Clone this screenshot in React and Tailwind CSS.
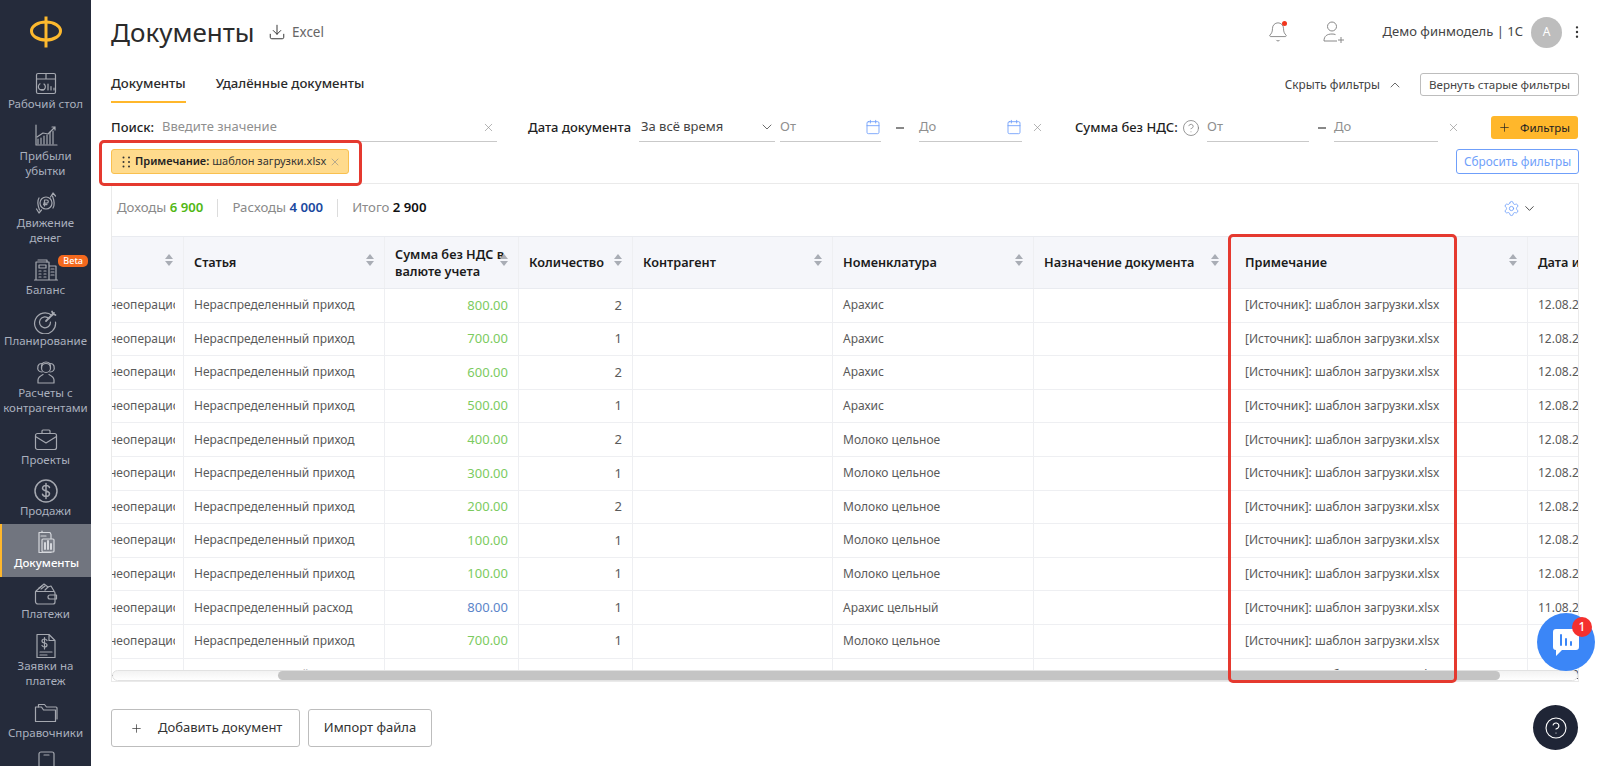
import React from "react";
import { Bell, Download, X, ChevronDown, ChevronUp, Calendar, CircleHelp, Plus, Settings, EllipsisVertical } from "lucide-react";

const S = (p) => <svg width="26" height="26" viewBox="0 0 26 26" fill="none" stroke="currentColor" strokeWidth="1.2" strokeLinecap="round" strokeLinejoin="round">{p.children}</svg>;

const icons = {
  desk: <S><rect x="3.5" y="2.5" width="19" height="20" rx="1.5" /><path d="M3.5 8h19M13 2.5V8" /><path d="M11 13a3.5 3.5 0 1 1-4-.2M7 18.5h4" /><path d="M15 13v6M18 15.5V19M21 17v2" /></S>,
  profit: <S><path d="M3 2v20h21" /><path d="M5 21v-5M8 21v-6M11 21v-8M14 21v-9M17 21V9M20 21V8" /><path d="M4 14l6-4 5 1 7-7M19 4h3v3" /></S>,
  money: <S><circle cx="13" cy="13" r="6" /><path d="M11.5 16v-6h2.2a1.6 1.6 0 0 1 0 3.2h-3M10.5 14.6h3.5" /><path d="M20 18c2-3 1-8-.5-12M17.5 7L20 3l2.5 3M6 8c-2 3-1 8 .5 12M3.5 19L6 23l2.5-3" /></S>,
  balance: <S><path d="M3 23V5h13v18M1.500 23h23M16 9h7v14" /><path d="M5 3h9v2M6 8h7v3H6zM6 14h2M11 14h2M6 17h2M11 17h2M6 20h2M11 20h2M18 12h3M18 15h3M18 18h3" /></S>,
  plan: <S><path d="M19 7.500A10.500 10.500 0 1 0 22.500 14" /><path d="M16 10.500A5.500 5.500 0 1 0 17.500 14" /><path d="M13 13l8-8M19 3.500l1 2.500 2.500 1" strokeWidth="1.800" /></S>,
  people: <S><circle cx="13" cy="8" r="4.500" /><path d="M8.500 8C8 4 10 2 13 2s5 2 4.500 6" /><path d="M5 23v-3c0-3 3-4.500 5-5.500M21 23v-3c0-3-3-4.500-5-5.500M5 23h16M9 12c-3 0-5-2-4-6 .5-1.500 2-2.500 3.500-2.500M17 12c3 0 5-2 4-6-.5-1.500-2-2.500-3.500-2.500" /></S>,
  case: <S><rect x="2.500" y="6.500" width="21" height="16" rx="2" /><path d="M9 6.500V4a1 1 0 0 1 1-1h6a1 1 0 0 1 1 1v2.500M2.500 9.500L13 16l10.500-6.500" /></S>,
  sale: <S><circle cx="13" cy="13" r="11" strokeWidth="1.500" /><path d="M16.500 9.500C16 8 14.500 7.500 13 7.500s-3.500 1-3.500 2.800S11 12.500 13 13s3.500 1 3.500 2.800-2 2.700-3.500 2.700-3-.7-3.500-2.200M13 5.500v15" strokeWidth="1.500" /></S>,
  docs: <S><path d="M5 2.500h11l1 2v18H5z" /><path d="M8 2.500V1M7 6h5" /><rect x="8" y="9" width="12" height="13" rx="1" fill="#7a7e88" /><path d="M11 19v-6M14 19v-8M17 19v-5" strokeWidth="2" /></S>,
  wallet: <S><path d="M3 10l8-7 4 3 3-1 3 5" /><path d="M6 7l3-2M8 8l4-3M12 9l3-3" /><path d="M2.500 10.500h18a1.500 1.500 0 0 1 1.500 1.500v9a2 2 0 0 1-2 2H5a2.500 2.500 0 0 1-2.500-2.500zM23.500 14H17a2 2 0 0 0 0 4h6.500z" /></S>,
  bill: <S><path d="M4 1.500h12l6 6v17H4zM16 1.500v6h6" /><path d="M14 7.500c-.5-1-1.500-1.500-2.500-1.500-1.300 0-2.500.7-2.500 2s1.200 1.800 2.500 2 2.500.7 2.500 2-1.200 2-2.500 2c-1 0-2-.5-2.500-1.500M11.500 4.500v11.500M7 19h12M7 22h7" /></S>,
  folder: <S><path d="M2.500 21.500V7h6l2 3h12v11.500z" /><path d="M5.500 7V4.500h6l2 2.500h9.500a1 1 0 0 1 1 1v11" /></S>,
  phone: <S><rect x="6" y="1" width="15" height="25" rx="2" /><path d="M11 4h5" /></S>,
};

const nav = [
  ["desk", ["Рабочий стол"]],
  ["profit", ["Прибыли", "убытки"]],
  ["money", ["Движение", "денег"]],
  ["balance", ["Баланс"], "beta"],
  ["plan", ["Планирование"]],
  ["people", ["Расчеты с", "контрагентами"]],
  ["case", ["Проекты"]],
  ["sale", ["Продажи"]],
  ["docs", ["Документы"], "active"],
  ["wallet", ["Платежи"]],
  ["bill", ["Заявки на", "платеж"]],
  ["folder", ["Справочники"]],
  ["phone", [""]],
];

function NavItem({ icon, lines, flag }) {
  const active = flag === "active";
  return (
    <div className={active
      ? "relative flex shrink-0 flex-col items-center pt-[7px] pb-[6.5px] -mb-[1.5px] bg-[#71757f] border-l-2 border-[#ffb72b] text-white font-medium"
      : "relative flex shrink-0 flex-col items-center pt-[7px] pb-[5px] text-[#aab0be]"}>
      <div className="flex h-6 w-full items-center justify-center text-[#a5a8b0]">{active ? <span className="text-[#d5d7dc]">{icons[icon]}</span> : icons[icon]}</div>
      {lines.map((l) => <div key={l} className="h-[15.5px] whitespace-nowrap text-center text-[11.5px] leading-[15.5px]">{l}</div>)}
      {flag === "beta" && <span className="absolute right-[3px] top-[4px] rounded-[5px] bg-[#f4691e] px-[5px] text-[9px] leading-[12px] font-medium text-white">Beta</span>}
    </div>
  );
}

function Sidebar() {
  return (
    <aside className="flex h-[766px] w-[91px] shrink-0 flex-col overflow-hidden bg-[#252b3b]">
      <div className="flex h-[65px] shrink-0 items-start justify-center pt-[15px]">
        <svg width="36" height="34" viewBox="0 0 36 34" fill="none" stroke="#fdb92e" strokeWidth="3"><ellipse cx="18" cy="16" rx="14.500" ry="9" /><path d="M18 1.500v31" /></svg>
      </div>
      {nav.map(([i, l, f]) => <NavItem key={i} icon={i} lines={l} flag={f} />)}
    </aside>
  );
}

function Field({ w, text, clear }) {
  return (
    <div className={`flex h-[29px] items-center justify-between border-b border-[#c9c9c9] text-[13px] text-[#8f8f8f] ${w}`}>
      <span>{text}</span>{clear}
    </div>
  );
}

const XI = () => <X size={13} strokeWidth={1.2} className="text-[#8c8c8c]" />;
const Cal = () => <Calendar size={16} strokeWidth={1.3} className="text-[#6f9ffa]" />;
const Dash = ({ w }) => <div className={`flex justify-center ${w}`}><span className="h-[2px] w-[8px] bg-[#888]" /></div>;

function Filters() {
  return (
    <div className="flex h-[29px] items-center text-[#1f1f1f]">
      <span className="w-[51px] text-[13px] font-medium">Поиск:</span>
      <Field w="w-[335px]" text="Введите значение" clear={<span className="pr-[2px]"><XI /></span>} />
      <span className="ml-[31px] w-[103px] whitespace-nowrap text-[13px] font-medium">Дата документа</span>
      <div className="ml-[8px] mr-[5px] flex h-[29px] w-[136px] items-center justify-between border-b border-[#c9c9c9] pl-[2px] text-[13px] text-[#444]">
        <span>За всё время</span><ChevronDown size={16} strokeWidth={1.3} className="text-[#555]" />
      </div>
      <Field w="w-[101px]" text="От" clear={<Cal />} />
      <Dash w="w-[38px]" />
      <Field w="w-[103px]" text="До" clear={<Cal />} />
      <div className="flex w-[30px] justify-center"><XI /></div>
      <span className="ml-[23px] w-[104px] whitespace-nowrap text-[13px] font-medium">Сумма без НДС:</span>
      <span className="flex w-[23px] justify-center"><CircleHelp size={18} strokeWidth={1} className="text-[#777]" /></span>
      <span className="w-[5px]" />
      <Field w="w-[102px]" text="От" />
      <Dash w="w-[25px]" />
      <Field w="w-[104px]" text="До" />
      <div className="flex w-[30px] justify-center"><XI /></div>
      <div className="ml-[23px] flex h-[23px] w-[87px] items-center justify-end gap-[9px] rounded-[3px] bg-[#ffb72b] pr-[8px] text-[11.5px] text-[#222]">
        <Plus size={13} strokeWidth={1.3} /><span>Фильтры</span>
      </div>
    </div>
  );
}

function Sort() {
  return (
    <span className="flex flex-col items-center gap-[2px]">
      <span className="h-0 w-0 border-x-[4px] border-b-[5px] border-x-transparent border-b-[#a9adb5]" />
      <span className="h-0 w-0 border-x-[4px] border-t-[5px] border-x-transparent border-t-[#a9adb5]" />
    </span>
  );
}

const cols = [
  { w: "w-[72px]", t: "" },
  { w: "w-[201px]", t: "Статья" },
  { w: "w-[134px]", t: "Сумма без НДС в валюте учета" },
  { w: "w-[114px]", t: "Количество" },
  { w: "w-[200px]", t: "Контрагент" },
  { w: "w-[201px]", t: "Номенклатура" },
  { w: "w-[196px]", t: "Назначение документа" },
  { w: "w-[298px] pl-[15px]", t: "Примечание" },
  { w: "w-[60px]", t: "Дата и" },
];

const P = "Нераспределенный приход", R = "Нераспределенный расход", M = "Молоко цельное";
const rows = [
  [P, "800.00", 2, "Арахис", "12.08.2"], [P, "700.00", 1, "Арахис", "12.08.2"], [P, "600.00", 2, "Арахис", "12.08.2"],
  [P, "500.00", 1, "Арахис", "12.08.2"], [P, "400.00", 2, M, "12.08.2"], [P, "300.00", 1, M, "12.08.2"],
  [P, "200.00", 2, M, "12.08.2"], [P, "100.00", 1, M, "12.08.2"], [P, "100.00", 1, M, "12.08.2"],
  [R, "800.00", 1, "Арахис цельный", "11.08.2"], [P, "700.00", 1, M, "12.08.2"], [R, "500.00", 2, "Арахис", "11.08.2"],
];

const cell = "flex shrink-0 items-center border-r border-[#eeeff2] px-[10px] whitespace-nowrap overflow-hidden";

function Table() {
  return (
    <div className="relative flex h-[445px] flex-col overflow-hidden">
      <div className="flex h-[53px] shrink-0 border-y border-[#e9ebf0] bg-[#f5f6fa] text-[12.7px] leading-[17px] font-semibold text-[#1b1b1b]">
        {cols.map((c, i) => (
          <div key={i} className={`relative ${cell} ${c.w}`}>
            {i === 2 ? <span className="whitespace-normal">{c.t}</span> : <span>{c.t}</span>}
            {i < 8 && <span className="absolute right-[10px] top-[17px]"><Sort /></span>}
          </div>
        ))}
      </div>
      {rows.map((r, i) => (
        <div key={i} className="flex h-[33.6px] shrink-0 border-b border-[#eeeff2] text-[12px] text-[#5a5a5a]">
          <div className={`${cell} ${cols[0].w} pl-0 pr-[8px]`}><span className="block w-full overflow-hidden"><span className="-ml-[3px] inline-block">неоперационный</span></span></div>
          <div className={`${cell} ${cols[1].w}`}>{r[0]}</div>
          <div className={`${cell} ${cols[2].w} justify-end text-[13px] ${r[0] === R ? "text-[#5b85c9]" : "text-[#7ccb5f]"}`}>{r[1]}</div>
          <div className={`${cell} ${cols[3].w} justify-end text-[13px]`}>{r[2]}</div>
          <div className={`${cell} ${cols[4].w}`} />
          <div className={`${cell} ${cols[5].w}`}>{r[3]}</div>
          <div className={`${cell} ${cols[6].w}`} />
          <div className={`${cell} ${cols[7].w}`}>[Источник]: шаблон загрузки.xlsx</div>
          <div className={`${cell} ${cols[8].w} border-r-0`}>{r[4]}</div>
        </div>
      ))}
      <div className="absolute bottom-0 left-0 right-0 h-[11px] rounded-full border border-[#e2e2e2] bg-gradient-to-b from-[#f2f2f2] to-[#ffffff]">
        <div className="ml-[165px] h-full w-[1222px] rounded-full bg-[#c4c4c4]" />
      </div>
    </div>
  );
}

export default function App() {
  return (
    <div className="relative flex h-[766px] w-[1600px] overflow-hidden bg-white text-[#222]" style={{ fontFamily: '"Noto Sans", sans-serif' }}>
      <Sidebar />
      <main className="flex min-w-0 flex-1 flex-col pl-[20px] pr-[21px]">
        <header className="flex h-[64px] shrink-0 items-center">
          <h1 className="w-[157px] text-[26px] font-normal leading-none text-[#2b2b2b]">Документы</h1>
          <Download size={18} strokeWidth={1.3} className="text-[#333]" />
          <span className="ml-[6px] text-[13.5px] text-[#666]">Excel</span>
          <div className="-mr-[6px] ml-auto flex items-center">
            <span className="relative"><Bell size={22} strokeWidth={0.9} className="text-[#777]" /><span className="absolute right-[2px] top-[0px] h-[5px] w-[5px] rounded-full bg-[#f1361d]" /></span>
            <svg className="ml-[33px]" width="24" height="24" viewBox="0 0 24 24" fill="none" stroke="#888" strokeWidth="1"><circle cx="10" cy="6.500" r="4.500" /><path d="M2 21c0-5 3-7 8-7 1.500 0 2.500.2 3.500.6M2 21h13M19 17v6M16 20h6" /></svg>
            <span className="ml-[37px] text-[13px] text-[#444]">Демо финмодель | 1С</span>
            <span className="ml-[8px] flex h-[31px] w-[31px] items-center justify-center rounded-full bg-[#bdbdbd] text-[12px] text-white">A</span>
            <EllipsisVertical size={16} strokeWidth={1.6} className="ml-[7px] text-[#333]" />
          </div>
        </header>

        <div className="flex h-[40px] shrink-0 items-start justify-between">
          <div className="flex gap-[30px] text-[13.2px] font-medium text-[#2b2b2b]">
            <span className="h-[39px] border-b-2 border-[#ffb72b] pt-[9px] leading-[20px]">Документы</span>
            <span className="pt-[9px] leading-[20px]">Удалённые документы</span>
          </div>
          <div className="mt-[9px] flex items-center text-[11.8px] text-[#444]">
            <span>Скрыть фильтры</span>
            <ChevronUp size={16} strokeWidth={1.2} className="ml-[7px] text-[#444]" />
            <span className="ml-[17px] flex h-[23px] w-[159px] items-center justify-center rounded-[3px] border border-[#bdbdbd] text-[11.6px]">Вернуть старые фильтры</span>
          </div>
        </div>

        <div className="mt-[9px] shrink-0"><Filters /></div>

        <div className="mt-[7px] flex shrink-0 items-center justify-between">
          <div className="flex h-[25px] w-[238px] items-center whitespace-nowrap rounded-[3px] border border-[#f9c04f] bg-[#ffdb8d] pl-[10px] text-[11px] text-[#333]">
            <svg width="9" height="12" viewBox="0 0 9 12" fill="#333"><circle cx="1.500" cy="1.500" r="1" /><circle cx="7" cy="1.500" r="1" /><circle cx="1.500" cy="6" r="1" /><circle cx="7" cy="6" r="1" /><circle cx="1.500" cy="10.500" r="1" /><circle cx="7" cy="10.500" r="1" /></svg>
            <b className="ml-[4px] font-semibold text-[#222]">Примечание:</b>
            <span className="ml-[3px]">шаблон загрузки.xlsx</span>
            <X size={12} strokeWidth={1.2} className="ml-[3px] text-[#888]" />
          </div>
          <span className="flex h-[25px] w-[123px] items-center justify-center rounded-[3px] border border-[#6f9ffa] text-[11.8px] text-[#6f9ffa]">Сбросить фильтры</span>
        </div>

        <section className="mt-[9px] h-[499px] shrink-0 border border-[#eaeaea]">
          <div className="flex h-[52px] items-center pb-[4px] pl-[5px] pr-[41px] text-[13.2px] text-[#8a8a8a]">
            <span>Доходы <b className="font-semibold text-[#52b814]">6 900</b></span>
            <span className="mx-[14px] h-[18px] w-px bg-[#dcdcdc]" />
            <span>Расходы <b className="font-semibold text-[#1b49a0]">4 000</b></span>
            <span className="mx-[14px] h-[18px] w-px bg-[#dcdcdc]" />
            <span>Итого <b className="font-semibold text-[#111]">2 900</b></span>
            <span className="ml-auto flex items-center gap-[2px]">
              <Settings size={17} strokeWidth={1.2} className="text-[#6f9ffa]" />
              <ChevronDown size={15} strokeWidth={1.4} className="text-[#333]" />
            </span>
          </div>
          <Table />
        </section>

        <div className="mt-[27px] flex shrink-0 gap-[8px] text-[13px] text-[#333]">
          <span className="flex h-[38px] w-[189px] items-center rounded-[3px] border border-[#bdbdbd] pl-[18px]"><Plus size={13} strokeWidth={1.3} /><span className="ml-[15px]">Добавить документ</span></span>
          <span className="flex h-[38px] w-[124px] items-center justify-center rounded-[3px] border border-[#bdbdbd]">Импорт файла</span>
        </div>
      </main>

      <div className="pointer-events-none absolute left-[99px] top-[140px] h-[46px] w-[263px] rounded-[5px] border-[3px] border-[#e5392f]" />
      <div className="pointer-events-none absolute left-[1228px] top-[234px] h-[449px] w-[229px] rounded-[5px] border-[3px] border-[#e5392f]" />

      <div className="absolute left-[1537px] top-[613px] flex h-[58px] w-[58px] items-center justify-center rounded-full bg-[#3b86f7]">
        <svg width="30" height="30" viewBox="0 0 30 30"><path d="M5 2h20a3 3 0 0 1 3 3v15a3 3 0 0 1-3 3H11l-6 6v-6a3 3 0 0 1-3-3V5a3 3 0 0 1 3-3z" fill="#fff" /><path d="M10 8v10M15 12v6M20 15v3" stroke="#3b86f7" strokeWidth="2" strokeLinecap="round" /></svg>
      </div>
      <span className="absolute left-[1572px] top-[617px] flex h-[20px] w-[20px] items-center justify-center rounded-full bg-[#f5302e] text-[12px] font-medium text-white">1</span>
      <div className="absolute left-[1533px] top-[705px] flex h-[45px] w-[45px] items-center justify-center rounded-full bg-[#1f2536]">
        <CircleHelp size={24} strokeWidth={1.1} className="text-white" />
      </div>
    </div>
  );
}
